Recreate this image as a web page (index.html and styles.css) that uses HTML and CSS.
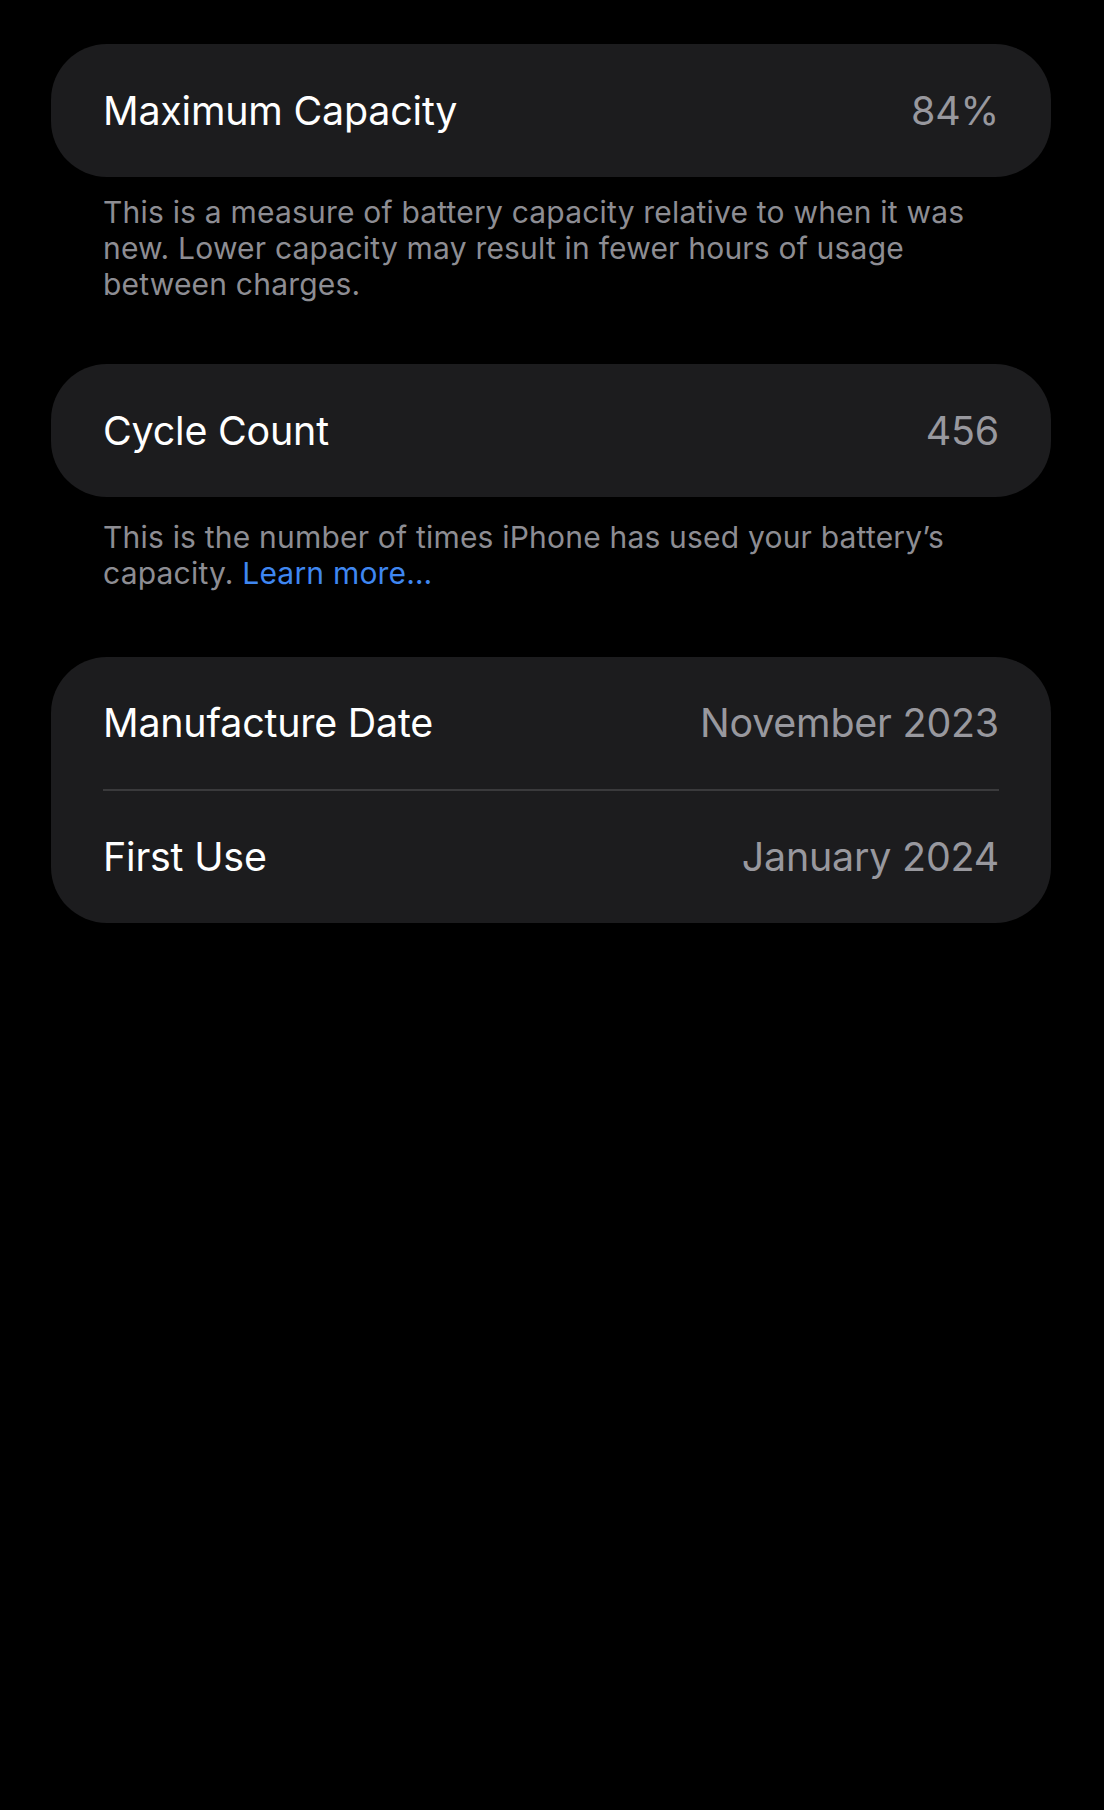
FILE: index.html
```html
<!DOCTYPE html>
<html lang="en">
<head>
<meta charset="utf-8">
<title>Battery Health</title>
<link rel="stylesheet" href="styles.css">
</head>
<body>
<main class="page">
  <section class="group">
    <div class="card">
      <div class="row">
        <span class="label">Maximum Capacity</span>
        <span class="value">84%</span>
      </div>
    </div>
    <p class="footer">This is a measure of battery capacity relative to when it was new. Lower capacity may result in fewer hours of usage between charges.</p>
  </section>
  <section class="group">
    <div class="card">
      <div class="row">
        <span class="label">Cycle Count</span>
        <span class="value">456</span>
      </div>
    </div>
    <p class="footer footer-link">This is the number of times iPhone has used your battery’s capacity. <a class="link" href="#">Learn more…</a></p>
  </section>
  <section class="group">
    <div class="card">
      <div class="row">
        <span class="label">Manufacture Date</span>
        <span class="value">November 2023</span>
      </div>
      <div class="divider"></div>
      <div class="row">
        <span class="label">First Use</span>
        <span class="value">January 2024</span>
      </div>
    </div>
  </section>
</main>
</body>
</html>
```

FILE: styles.css
```css
html, body {
  margin: 0;
  padding: 0;
  background: #000;
}
body {
  width: 1104px;
  height: 1810px;
  overflow: hidden;
  font-family: Inter, "Noto Sans", "Liberation Sans", sans-serif;
  -webkit-font-smoothing: antialiased;
}
.page {
  padding: 44px 53px 0 51px;
  display: flex;
  flex-direction: column;
}
.group {
  display: flex;
  flex-direction: column;
}
.card {
  background: #1c1c1e;
  border-radius: 56px;
  padding: 0 52px;
  display: flex;
  flex-direction: column;
}
.row {
  height: 132px;
  display: flex;
  align-items: center;
  justify-content: space-between;
}
.card > .row:only-child {
  height: 133px;
}
.divider {
  height: 2px;
  background: #3a3a3c;
}
.label {
  color: #fff;
  font-size: 39.4px;
  letter-spacing: -0.2px;
}
.value {
  color: #98989e;
  font-size: 39.4px;
  letter-spacing: -0.2px;
}
.footer {
  margin: 0;
  width: 900px;
  padding: 17px 0 62px 52px;
  color: #8d8d93;
  font-size: 30px;
  letter-spacing: 0.2px;
  line-height: 36px;
}
.footer-link {
  padding-top: 22px;
  padding-bottom: 66px;
}
.link {
  color: #3f87f1;
  text-decoration: none;
}
```
